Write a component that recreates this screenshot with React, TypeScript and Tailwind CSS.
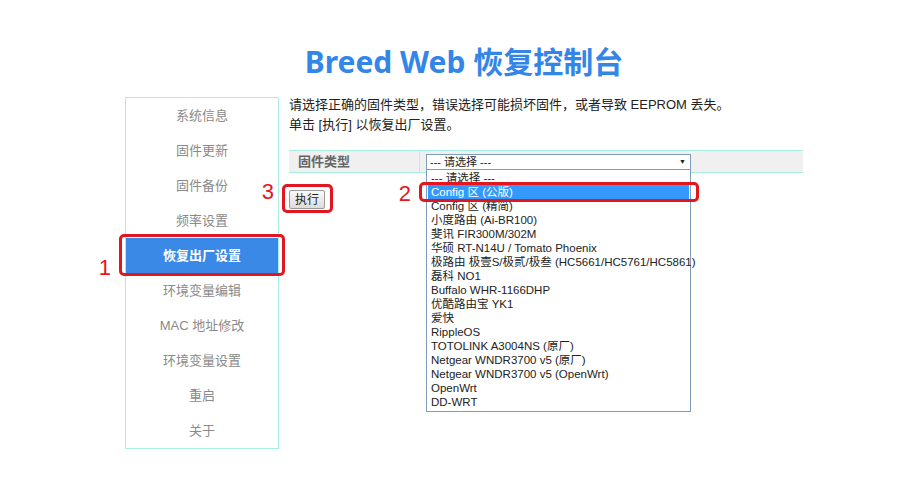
import type { ReactNode } from 'react'

const menu = ['系统信息', '固件更新', '固件备份', '频率设置', '恢复出厂设置', '环境变量编辑', 'MAC 地址修改', '环境变量设置', '重启', '关于']

const options = [
  '--- 请选择 ---',
  'Config 区 (公版)',
  'Config 区 (精简)',
  '小度路由 (Ai-BR100)',
  '斐讯 FIR300M/302M',
  '华硕 RT-N14U / Tomato Phoenix',
  '极路由 极壹S/极贰/极叁 (HC5661/HC5761/HC5861)',
  '磊科 NO1',
  'Buffalo WHR-1166DHP',
  '优酷路由宝 YK1',
  '爱快',
  'RippleOS',
  'TOTOLINK A3004NS (原厂)',
  'Netgear WNDR3700 v5 (原厂)',
  'Netgear WNDR3700 v5 (OpenWrt)',
  'OpenWrt',
  'DD-WRT',
]

// red step number shown beside an annotated control
function Step({ n, className }: { n: string; className: string }) {
  return (
    <span className={`pointer-events-none absolute text-[22px] leading-[22px] text-[#e3161f] font-['Liberation_Sans',sans-serif] ${className}`}>
      {n}
    </span>
  )
}

function Ring({ className }: { className: string }) {
  return <span className={`pointer-events-none absolute rounded-[5px] border-[3px] border-[#e3161f] ${className}`} />
}

function Marked({ children }: { children: ReactNode }) {
  return <div className="relative">{children}</div>
}

export default function App() {
  return (
    <div className="h-[500px] w-[900px] bg-white font-['Liberation_Sans','Noto_Sans_CJK_SC',sans-serif]">
      <div className="ml-[125px] w-[678px] pt-[44px]">
        <h1 className="text-center font-['Noto_Sans','Noto_Sans_CJK_SC',sans-serif] text-[30px] font-bold leading-[36px] text-[#3386e8]">
          Breed Web 恢复控制台
        </h1>

        <div className="mt-[17px] flex items-start gap-[10px]">
          {/* Side menu */}
          <nav className="w-[154px] border border-[#a6efdf]">
            {menu.map((item) =>
              item === '恢复出厂设置' ? (
                <Marked key={item}>
                  <div className="flex h-[35px] items-center justify-center bg-[#3a89e6] text-[13px] font-bold text-white">
                    {item}
                  </div>
                  <Ring className="-inset-x-[7px] -top-[4px] -bottom-[3px]" />
                  <Step n="1" className="right-full top-[19px] mr-[15px]" />
                </Marked>
              ) : (
                <div key={item} className="flex h-[35px] items-center justify-center text-[13px] text-[#8a8a8a]">
                  {item}
                </div>
              ),
            )}
          </nav>

          {/* Content */}
          <div className="min-w-0 flex-1">
            <p className="-mt-[2px] text-[13px] leading-[20px] text-[#222]">
              请选择正确的固件类型，错误选择可能损坏固件，或者导致 EEPROM 丢失。
              <br />
              单击 [执行] 以恢复出厂设置。
            </p>

            <div className="mt-[15px] flex h-[23px] border-y border-[#a6efdf] bg-[#f0f0f0]">
              <div className="flex w-[131px] items-center border-r border-[#c9e6dd] pl-[9px] text-[13px] font-bold text-[#666]">
                固件类型
              </div>
              <div className="flex flex-1 items-center pl-[6px]">
                <div className="relative">
                  <div className="flex h-[16px] w-[265px] items-center justify-between border border-[#7f9db9] bg-white pl-[3px] pr-[4px] text-[11px] leading-[14px] text-[#222]">
                    <span>--- 请选择 ---</span>
                    <span className="text-[7px] text-[#222]">▼</span>
                  </div>

                  {/* open option list */}
                  <ul className="absolute left-0 top-full z-10 w-[265px] border border-t-0 border-[#7f9db9] bg-white pb-[2px] pt-[1px] text-[11.5px] leading-[14px] text-[#222]">
                    {options.map((opt) =>
                      opt === 'Config 区 (公版)' ? (
                        <li key={opt} className="relative mx-[1px] bg-[#3399ff] px-[3px] text-white">
                          {opt}
                          <Ring className="-left-[9px] -right-[10px] -top-[3px] -bottom-[3px]" />
                          <Step n="2" className="right-full -top-[2px] mr-[17px]" />
                        </li>
                      ) : (
                        <li key={opt} className="whitespace-nowrap px-[4px]">
                          {opt}
                        </li>
                      ),
                    )}
                  </ul>
                </div>
              </div>
            </div>

            <div className="mt-[17px] flex">
              <Marked>
                <button
                  type="button"
                  className="flex h-[19px] w-[36px] items-center justify-center rounded-[2px] border border-[#9a9a9a] bg-gradient-to-b from-[#fafafa] to-[#dcdcdc] text-[12px] text-[#222]"
                >
                  执行
                </button>
                <Ring className="-left-[7px] -right-[8px] -top-[6px] -bottom-[4px]" />
                <Step n="3" className="right-full -top-[9px] mr-[15px]" />
              </Marked>
            </div>
          </div>
        </div>
      </div>
    </div>
  )
}
